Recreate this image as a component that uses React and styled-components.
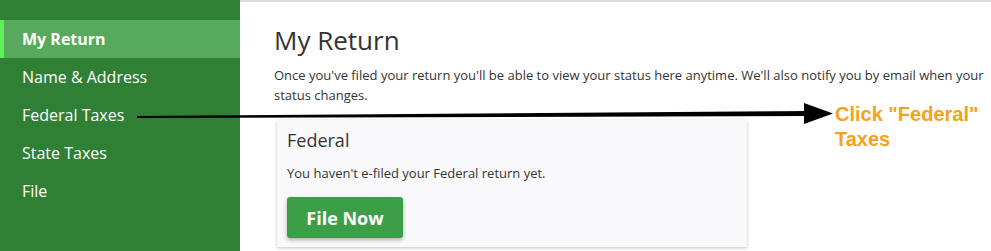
import React from "react";
import styled, { createGlobalStyle } from "styled-components";

const Global = createGlobalStyle`
  html, body { margin: 0; padding: 0; background: #fff; }
  body { font-family: "Open Sans", "Noto Sans", sans-serif; }
`;

const Page = styled.div`
  position: relative;
  display: flex;
  width: 991px;
  height: 251px;
  overflow: hidden;
`;

const Sidebar = styled.nav`
  width: 240px;
  flex: none;
  background: #2f7f35;
  padding-top: 20px;
  display: flex;
  flex-direction: column;
`;

const NavItem = styled.div`
  height: 38px;
  display: flex;
  align-items: center;
  font-size: 16px;
  color: #fff;
  font-weight: ${(p) => (p.$active ? 700 : 400)};
  background: ${(p) => (p.$active ? "#57a95b" : "transparent")};
  border-left: 4px solid ${(p) => (p.$active ? "#5ef05c" : "transparent")};
  box-sizing: border-box;
  padding-left: 18px;
`;

const Main = styled.main`
  flex: 1;
  border-top: 2px solid #dcdcdc;
  padding: 20px 0 0 34px;
  box-sizing: border-box;
`;

const Title = styled.h1`
  margin: 0;
  font-size: 26px;
  font-weight: 400;
  color: #333;
  line-height: 36px;
`;

const Intro = styled.p`
  margin: 7px 0 0;
  font-size: 13px;
  line-height: 20px;
  color: #333;
  width: 716px;
`;

const Card = styled.section`
  margin: 15px 0 0 3px;
  width: 470px;
  background: #f9f9fc;
  box-shadow: 0 1px 3px rgba(0, 0, 0, 0.25);
  padding: 8px 10px 9px;
  box-sizing: border-box;
`;

const CardTitle = styled.h2`
  margin: 0;
  font-size: 18px;
  font-weight: 400;
  color: #333;
  line-height: 24px;
`;

const CardText = styled.p`
  margin: 12px 0 0;
  font-size: 13px;
  line-height: 18px;
  color: #333;
`;

const Button = styled.button`
  display: block;
  margin-top: 15px;
  width: 116px;
  height: 41px;
  border: none;
  border-radius: 3px;
  background: #3c9f48;
  color: #fff;
  font-family: "Open Sans", sans-serif;
  font-weight: 700;
  font-size: 18px;
  box-shadow: 0 2px 4px rgba(0, 0, 0, 0.3);
`;

const ArrowSvg = styled.svg`
  position: absolute;
  left: 0;
  top: 0;
  pointer-events: none;
`;

const Callout = styled.div`
  position: absolute;
  left: 835px;
  top: 102px;
  font-family: "Liberation Sans", Arial, sans-serif;
  font-weight: 700;
  font-size: 20px;
  line-height: 25px;
  color: #f7a11b;
`;

export default function App() {
  const items = ["My Return", "Name & Address", "Federal Taxes", "State Taxes", "File"];
  return (
    <Page>
      <Global />
      <Sidebar>
        {items.map((t, i) => (
          <NavItem key={t} $active={i === 0}>{t}</NavItem>
        ))}
      </Sidebar>
      <Main>
        <Title>My Return</Title>
        <Intro>
          Once you've filed your return you'll be able to view your status here anytime. We'll also notify you by email when your status changes.
        </Intro>
        <Card>
          <CardTitle>Federal</CardTitle>
          <CardText>You haven't e-filed your Federal return yet.</CardText>
          <Button>File Now</Button>
        </Card>
      </Main>
      <ArrowSvg width="991" height="251" viewBox="0 0 991 251">
        <polygon points="137,116 137,118 808,116 808,111" fill="#000" />
        <polygon points="804,103 833,113.5 804,124" fill="#000" />
      </ArrowSvg>
      <Callout>
        Click "Federal"
        <br />
        Taxes
      </Callout>
    </Page>
  );
}
